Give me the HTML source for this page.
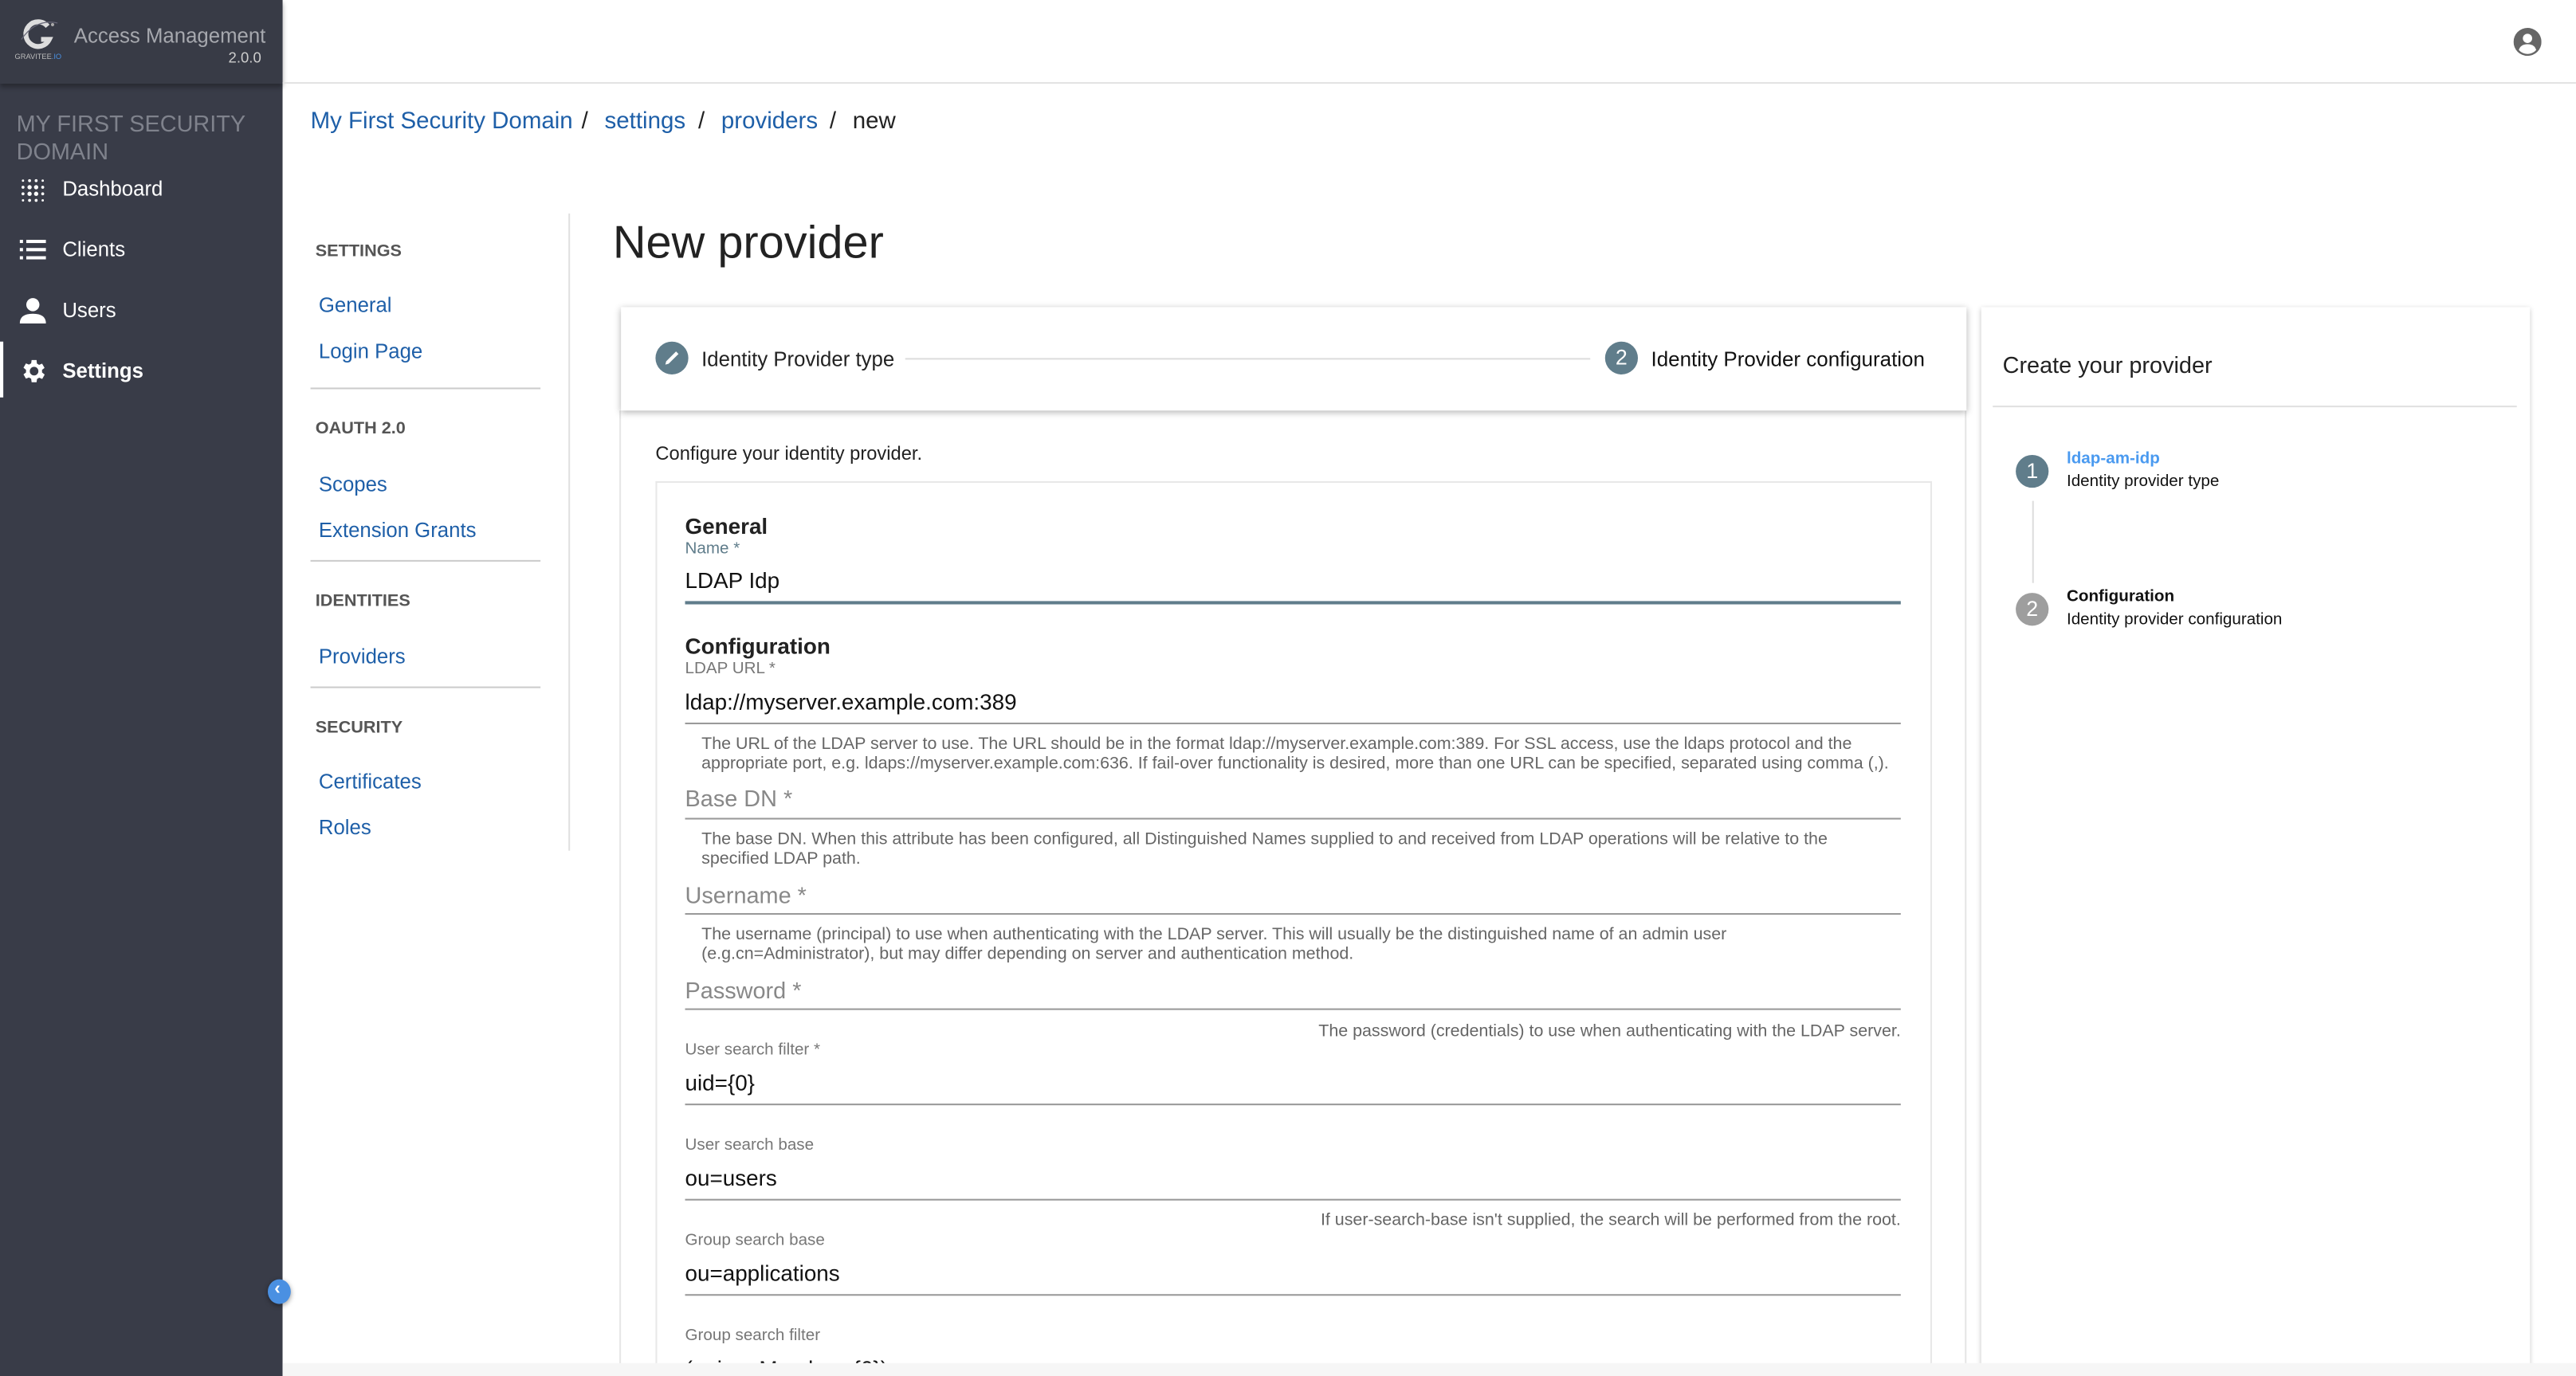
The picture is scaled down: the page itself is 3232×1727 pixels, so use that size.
<!DOCTYPE html>
<html><head><meta charset="utf-8"><style>
html,body{margin:0;padding:0;width:3232px;height:1726px;overflow:hidden;background:#fff;}
#w{position:absolute;left:0;top:0;width:1568px;height:838px;overflow:hidden;transform:scale(2.0612);transform-origin:0 0;font-family:"Liberation Sans",Arial,sans-serif;color:#222;}
.a{position:absolute;white-space:nowrap;line-height:1;}
.ln{position:absolute;}
.nav{color:#fff;font-size:12.5px;}
.sh{font-size:10.5px;font-weight:bold;color:#555;}
.lk{font-size:12.5px;color:#1e5fa8;}
.lbl{font-size:10px;color:#777;}
.val{font-size:13.5px;color:#111;}
.ph{font-size:14px;color:#888;}
.hlp{font-size:10.4px;color:#666;line-height:11.6px;white-space:normal;}
.ul{position:absolute;left:417px;width:740px;height:1px;background:#999;}
.bc{font-size:14.3px;color:#1e5fa8;top:67px;}
.bs{font-size:14.3px;color:#222;top:67px;}
</style></head><body><div id="w">
<!-- sidebar -->
<div class="ln" style="left:0;top:0;width:172px;height:838px;background:#393c48"></div>
<div class="ln" style="left:0;top:0;width:172px;height:51px;background:#383b46;box-shadow:0 2px 3px rgba(0,0,0,.35)"></div>
<svg class="ln" style="left:10px;top:10px" width="30" height="24" viewBox="0 0 30 24"><path d="M19 6 A7.5 7.5 0 1 0 20 14 L15 14" fill="none" stroke="#ddd" stroke-width="3"/><circle cx="22" cy="5" r="1" fill="#aaa"/><path d="M3 14 Q12 1 25 4" fill="none" stroke="#667" stroke-width=".6"/></svg>
<div class="a" style="left:9px;top:33px;font-size:4.5px;color:#bbb">GRAVITEE<span style="color:#4a90e2">.IO</span></div>
<div class="a" style="left:45px;top:16px;font-size:12.5px;color:#a6a8ae">Access Management</div>
<div class="a" style="left:139px;top:31px;font-size:9px;color:#ccc">2.0.0</div>
<div class="a" style="left:10px;top:67px;font-size:14px;color:#7f828c;line-height:16.5px">MY FIRST SECURITY<br>DOMAIN</div>
<svg class="ln" style="left:12px;top:108px" width="16" height="16" viewBox="0 0 16 16" fill="#fff"><g><circle cx="2" cy="2" r=".7"/><circle cx="6" cy="2" r=".9"/><circle cx="10" cy="2" r=".9"/><circle cx="14" cy="2" r=".7"/><circle cx="2" cy="6" r=".9"/><circle cx="6" cy="6" r="1.3"/><circle cx="10" cy="6" r="1.3"/><circle cx="14" cy="6" r=".9"/><circle cx="2" cy="10" r=".9"/><circle cx="6" cy="10" r="1.3"/><circle cx="10" cy="10" r="1.3"/><circle cx="14" cy="10" r=".9"/><circle cx="2" cy="14" r=".7"/><circle cx="6" cy="14" r=".9"/><circle cx="10" cy="14" r=".9"/><circle cx="14" cy="14" r=".7"/></g></svg>
<div class="a nav" style="left:38px;top:109px">Dashboard</div>
<svg class="ln" style="left:12px;top:146px" width="16" height="12" viewBox="0 0 16 12" fill="#fff"><rect x="0" y="0" width="2" height="2"/><rect x="4" y="0" width="12" height="2"/><rect x="0" y="5" width="2" height="2"/><rect x="4" y="5" width="12" height="2"/><rect x="0" y="10" width="2" height="2"/><rect x="4" y="10" width="12" height="2"/></svg>
<div class="a nav" style="left:38px;top:146px">Clients</div>
<svg class="ln" style="left:12px;top:181px" width="16" height="16" viewBox="0 0 16 16" fill="#fff"><circle cx="8" cy="4.5" r="4"/><path d="M0 16 Q0 10 8 10 Q16 10 16 16Z"/></svg>
<div class="a nav" style="left:38px;top:183px">Users</div>
<div class="ln" style="left:0;top:208px;width:2px;height:34px;background:#fff"></div>
<svg class="ln" style="left:11px;top:217px" width="18" height="18" viewBox="0 0 24 24" fill="#fff"><path d="M19.4 13a7.5 7.5 0 000-2l2.1-1.6-2-3.5-2.5 1a7 7 0 00-1.7-1L15 3h-4l-.4 2.7a7 7 0 00-1.7 1l-2.5-1-2 3.5L6.5 11a7.5 7.5 0 000 2l-2.1 1.6 2 3.5 2.5-1a7 7 0 001.7 1L11 21h4l.4-2.7a7 7 0 001.7-1l2.5 1 2-3.5zM13 15.5A3.5 3.5 0 1113 8.5a3.5 3.5 0 010 7z"/></svg>
<div class="a nav" style="left:38px;top:220px;font-weight:bold">Settings</div>
<div class="ln" style="left:163px;top:779px;width:14px;height:15px;border-radius:50%;background:#4a90e2;box-shadow:0 1px 3px rgba(0,0,0,.4)"></div>
<div class="a" style="left:167px;top:780px;font-size:11px;color:#fff;font-weight:bold">‹</div>
<!-- topbar -->
<div class="ln" style="left:172px;top:50px;width:1396px;height:1px;background:#e2e2e2"></div>
<svg class="ln" style="left:1530px;top:17px" width="17" height="17" viewBox="0 0 24 24"><circle cx="12" cy="12" r="12" fill="#666"/><circle cx="12" cy="9" r="4" fill="#fff"/><path d="M4.5 19 Q6 14 12 14 Q18 14 19.5 19 A10 10 0 014.5 19Z" fill="#fff"/></svg>
<!-- breadcrumb -->
<div class="a bc" style="left:189px">My First Security Domain</div>
<div class="a bs" style="left:354px">/</div>
<div class="a bc" style="left:368px">settings</div>
<div class="a bs" style="left:425px">/</div>
<div class="a bc" style="left:439px">providers</div>
<div class="a bs" style="left:505px">/</div>
<div class="a bs" style="left:519px">new</div>
<!-- settings nav -->
<div class="ln" style="left:346px;top:130px;width:1px;height:388px;background:#e0e0e0"></div>
<div class="a sh" style="left:192px;top:148px">SETTINGS</div>
<div class="a lk" style="left:194px;top:180px">General</div>
<div class="a lk" style="left:194px;top:208px">Login Page</div>
<div class="ln" style="left:189px;top:236px;width:140px;height:1px;background:#ccc"></div>
<div class="a sh" style="left:192px;top:256px">OAUTH 2.0</div>
<div class="a lk" style="left:194px;top:289px">Scopes</div>
<div class="a lk" style="left:194px;top:317px">Extension Grants</div>
<div class="ln" style="left:189px;top:341px;width:140px;height:1px;background:#ccc"></div>
<div class="a sh" style="left:192px;top:361px">IDENTITIES</div>
<div class="a lk" style="left:194px;top:394px">Providers</div>
<div class="ln" style="left:189px;top:418px;width:140px;height:1px;background:#ccc"></div>
<div class="a sh" style="left:192px;top:438px">SECURITY</div>
<div class="a lk" style="left:194px;top:470px">Certificates</div>
<div class="a lk" style="left:194px;top:498px">Roles</div>
<!-- title -->
<div class="a" style="left:373px;top:134px;font-size:28px;color:#222">New provider</div>
<!-- content card -->
<div class="ln" style="left:377px;top:250px;width:820px;height:600px;border-left:1px solid #e6e6e6;border-right:1px solid #e6e6e6;box-sizing:border-box"></div>
<div class="ln" style="left:378px;top:187px;width:819px;height:63px;background:#fff;box-shadow:0 1px 4px rgba(0,0,0,.3)"></div>
<div class="ln" style="left:399px;top:208px;width:20px;height:20px;border-radius:50%;background:#607d8b"></div>
<svg class="ln" style="left:403px;top:212px" width="12" height="12" viewBox="0 0 12 12"><path d="M2 10 L2.5 8 L8.5 2 L10 3.5 L4 9.5Z" fill="#fff"/></svg>
<div class="a" style="left:427px;top:213px;font-size:12.5px">Identity Provider type</div>
<div class="ln" style="left:551px;top:218px;width:417px;height:1px;background:#ddd"></div>
<div class="ln" style="left:977px;top:208px;width:20px;height:20px;border-radius:50%;background:#607d8b;color:#fff;font-size:13px;text-align:center;line-height:20px">2</div>
<div class="a" style="left:1005px;top:213px;font-size:12.6px;color:#111">Identity Provider configuration</div>
<div class="a" style="left:399px;top:272px;font-size:11.5px">Configure your identity provider.</div>
<div class="ln" style="left:399px;top:293px;width:777px;height:560px;border:1px solid #e8e8e8;border-bottom:none;box-sizing:border-box"></div>
<div class="a" style="left:417px;top:314px;font-size:13.5px;font-weight:bold">General</div>
<div class="a" style="left:417px;top:330px;font-size:10px;color:#607d8b">Name *</div>
<div class="a val" style="left:417px;top:347px">LDAP Idp</div>
<div class="ul" style="top:366px;height:2px;background:#607d8b"></div>
<div class="a" style="left:417px;top:387px;font-size:13.5px;font-weight:bold">Configuration</div>
<div class="a lbl" style="left:417px;top:403px">LDAP URL *</div>
<div class="a val" style="left:417px;top:421px">ldap://myserver.example.com:389</div>
<div class="ul" style="top:440px"></div>
<div class="a hlp" style="left:427px;top:448px;width:728px">The URL of the LDAP server to use. The URL should be in the format ldap://myserver.example.com:389. For SSL access, use the ldaps protocol and the appropriate port, e.g. ldaps://myserver.example.com:636. If fail-over functionality is desired, more than one URL can be specified, separated using comma (,).</div>
<div class="a ph" style="left:417px;top:479px">Base DN *</div>
<div class="ul" style="top:498px"></div>
<div class="a hlp" style="left:427px;top:506px;width:705px">The base DN. When this attribute has been configured, all Distinguished Names supplied to and received from LDAP operations will be relative to the specified LDAP path.</div>
<div class="a ph" style="left:417px;top:538px">Username *</div>
<div class="ul" style="top:556px"></div>
<div class="a hlp" style="left:427px;top:564px;width:650px">The username (principal) to use when authenticating with the LDAP server. This will usually be the distinguished name of an admin user (e.g.cn=Administrator), but may differ depending on server and authentication method.</div>
<div class="a ph" style="left:417px;top:596px">Password *</div>
<div class="ul" style="top:614px"></div>
<div class="a hlp" style="left:700px;top:623px;width:457px;text-align:right">The password (credentials) to use when authenticating with the LDAP server.</div>
<div class="a lbl" style="left:417px;top:635px">User search filter *</div>
<div class="a val" style="left:417px;top:653px">uid={0}</div>
<div class="ul" style="top:672px"></div>
<div class="a lbl" style="left:417px;top:693px">User search base</div>
<div class="a val" style="left:417px;top:711px">ou=users</div>
<div class="ul" style="top:730px"></div>
<div class="a hlp" style="left:700px;top:738px;width:457px;text-align:right">If user-search-base isn't supplied, the search will be performed from the root.</div>
<div class="a lbl" style="left:417px;top:751px">Group search base</div>
<div class="a val" style="left:417px;top:769px">ou=applications</div>
<div class="ul" style="top:788px"></div>
<div class="a lbl" style="left:417px;top:809px">Group search filter</div>
<div class="a val" style="left:417px;top:827px">(uniqueMember={0})</div>
<!-- right card -->
<div class="ln" style="left:1206px;top:187px;width:334px;height:660px;background:#fff;box-shadow:0 1px 3px rgba(0,0,0,.25)"></div>
<div class="a" style="left:1219px;top:215px;font-size:14px;color:#222">Create your provider</div>
<div class="ln" style="left:1213px;top:247px;width:319px;height:1px;background:#e0e0e0"></div>
<div class="ln" style="left:1227px;top:277px;width:20px;height:20px;border-radius:50%;background:#607d8b;color:#fff;font-size:13px;text-align:center;line-height:20px">1</div>
<div class="a" style="left:1258px;top:275px;font-size:10px;font-weight:bold;color:#4a9af0">ldap-am-idp</div>
<div class="a" style="left:1258px;top:289px;font-size:10px;color:#111">Identity provider type</div>
<div class="ln" style="left:1237px;top:305px;width:1px;height:50px;background:#ddd"></div>
<div class="ln" style="left:1227px;top:361px;width:20px;height:20px;border-radius:50%;background:#9e9e9e;color:#fff;font-size:13px;text-align:center;line-height:20px">2</div>
<div class="a" style="left:1258px;top:359px;font-size:10px;font-weight:bold;color:#111">Configuration</div>
<div class="a" style="left:1258px;top:373px;font-size:10px;color:#111">Identity provider configuration</div>
<!-- bottom fade -->
<div class="ln" style="left:172px;top:830px;width:1396px;height:8px;background:#f6f6f6"></div>
</div></body></html>
